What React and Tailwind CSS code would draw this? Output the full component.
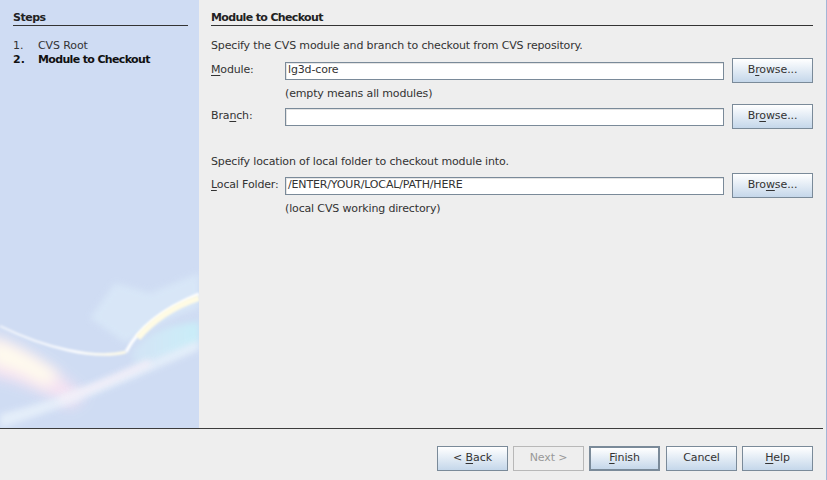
import React from "react";

const font = { fontFamily: '"DejaVu Sans", "Liberation Sans", sans-serif' };

function U({ children }) {
  return <span className="underline underline-offset-[2px] decoration-1">{children}</span>;
}

function Btn({ children, className = "", disabled = false, def = false }) {
  return (
    <div
      className={
        "flex h-[25px] w-[71px] items-center justify-center text-[11px] tracking-[-0.1px] " +
        (disabled
          ? "border border-[#b8b8b8] text-[#999999] bg-[#eeeeee] "
          : def
          ? "border-2 border-[#7a8a99] text-[#333333] bg-gradient-to-b from-[#ffffff] to-[#c5d7ea] "
          : "border border-[#7a8a99] text-[#333333] bg-gradient-to-b from-[#ffffff] to-[#c5d7ea] ") +
        className
      }
    >
      <span className="whitespace-pre">{children}</span>
    </div>
  );
}

function Input({ value }) {
  return (
    <div className="flex h-[18px] flex-1 items-center border border-[#7a8a99] bg-white pl-[2px] text-[11px] text-[#333333] shadow-[inset_1px_1px_0_#e4e4e4]">
      {value}
    </div>
  );
}

function Swoosh() {
  return (
    <svg className="absolute bottom-0 left-0" width="199" height="180" viewBox="0 0 199 180">
      <defs>
        <filter id="b1" x="-50%" y="-50%" width="200%" height="200%">
          <feGaussianBlur stdDeviation="7" />
        </filter>
        <filter id="b2" x="-50%" y="-50%" width="200%" height="200%">
          <feGaussianBlur stdDeviation="1.2" />
        </filter>
        <filter id="b3" x="-50%" y="-50%" width="200%" height="200%">
          <feGaussianBlur stdDeviation="3" />
        </filter>
        <linearGradient id="g2" x1="0" y1="0" x2="1" y2="0">
          <stop offset="0" stopColor="#d6ecf8" stopOpacity="0.5" />
          <stop offset="1" stopColor="#c8eef8" stopOpacity="1" />
        </linearGradient>
        <linearGradient id="g3" x1="0" y1="0" x2="1" y2="0">
          <stop offset="0" stopColor="#ffffff" stopOpacity="0.6" />
          <stop offset="0.6" stopColor="#ffffff" stopOpacity="0.95" />
          <stop offset="1" stopColor="#fffbe6" stopOpacity="1" />
        </linearGradient>
      </defs>
      <path d="M90 70 L115 35 L150 45 L199 25 L199 60 C165 70 145 85 125 95 Z" fill="#dcebf9" opacity="0.7" filter="url(#b3)" />
      <path d="M132 104 C148 82 175 76 199 74 L199 95 C175 108 150 115 135 118 Z" fill="url(#g2)" filter="url(#b3)" />
      <path d="M-10 88 C20 100 55 120 85 148 L70 160 C40 140 10 130 -10 128 Z" fill="#fbe3f2" opacity="0.9" filter="url(#b1)" />
      <path d="M-10 90 C15 98 40 112 60 128 L45 138 C25 125 5 118 -10 115 Z" fill="#fffced" filter="url(#b1)" />
      <path d="M0 78 C45 100 95 112 126 104" stroke="url(#g3)" strokeWidth="2.5" fill="none" filter="url(#b2)" />
      <path d="M126 104 C138 80 165 60 199 46" stroke="#ffffff" strokeWidth="3" fill="none" filter="url(#b2)" />
      <path d="M138 90 C155 70 175 58 199 50" stroke="#fffbe4" strokeWidth="6" fill="none" filter="url(#b2)" />
      <path d="M0 166 C60 152 130 122 199 92 L199 102 C130 132 60 162 0 180 Z" fill="#e8f1fb" opacity="0.85" filter="url(#b3)" />
      <path d="M60 152 C95 140 120 128 150 114" stroke="#f6eff8" strokeWidth="7" fill="none" filter="url(#b3)" opacity="0.8" />
    </svg>
  );
}

export default function App() {
  return (
    <div className="flex h-[480px] w-[827px] flex-col bg-[#eeeeee] text-[#333333]" style={font}>
      <div className="flex h-[428px]">
        <div className="relative h-full w-[199px] overflow-hidden bg-[#cfdcf3]">
          <div className="relative px-[13px] pt-[12px] pr-[11px]">
            <div className="border-b border-[#333333] pb-[1px] text-[11px] font-bold leading-[12px] tracking-[-0.5px] text-[#222222]">Steps</div>
            <div className="mt-[13px] flex text-[11px] leading-[14px] tracking-[-0.1px]">
              <span className="w-[25px]">1.</span>
              <span>CVS Root</span>
            </div>
            <div className="flex text-[11px] font-bold leading-[14px] text-[#111111]">
              <span className="w-[25px]">2.</span>
              <span className="tracking-[-0.65px]">Module to Checkout</span>
            </div>
          </div>
          <Swoosh />
        </div>
        <div className="flex-1 pl-[12px] pr-[13px] pt-[12px] tracking-[-0.15px]">
          <div className="border-b border-[#333333] pb-[1px] text-[11px] font-bold leading-[12px] tracking-[-0.65px] text-[#222222]">Module to Checkout</div>
          <div className="mt-[13px] text-[11px] leading-[14px]">Specify the CVS module and branch to checkout from CVS repository.</div>
          <div className="mt-[5px] flex items-center">
            <div className="w-[74px] text-[11px]"><U>M</U>odule:</div>
            <Input value="lg3d-core" />
            <Btn className="ml-[8px] w-[81px]">B<U>r</U>owse...</Btn>
          </div>
          <div className="mt-[4px] pl-[74px] text-[11px] leading-[14px]">(empty means all modules)</div>
          <div className="mt-[3px] flex items-center">
            <div className="w-[74px] text-[11px]">Bra<U>n</U>ch:</div>
            <Input value="" />
            <Btn className="ml-[8px] w-[81px]">Br<U>o</U>wse...</Btn>
          </div>
          <div className="mt-[26px] text-[11px] leading-[14px]">Specify location of local folder to checkout module into.</div>
          <div className="mt-[4px] flex items-center">
            <div className="w-[74px] text-[11px]"><U>L</U>ocal Folder:</div>
            <Input value="/ENTER/YOUR/LOCAL/PATH/HERE" />
            <Btn className="ml-[8px] w-[81px]">Bro<U>w</U>se...</Btn>
          </div>
          <div className="mt-[4px] pl-[74px] text-[11px] leading-[14px]">(local CVS working directory)</div>
        </div>
        <div className="w-[1px] bg-[#a3b5d6]" />
      </div>
      <div className="flex flex-1">
        <div className="flex flex-1 flex-col">
          <div className="mr-[3px] h-[1px] bg-[#3c3c3c]" />
          <div className="flex flex-1 items-start justify-end gap-[5px] pr-[13px] pt-[17px]">
            <Btn>&lt; <U>B</U>ack</Btn>
            <Btn disabled>Next &gt;</Btn>
            <Btn def><U>F</U>inish</Btn>
            <Btn className="ml-[1px]">Cancel</Btn>
            <Btn><U>H</U>elp</Btn>
          </div>
        </div>
        <div className="w-[1px] bg-[#a3b5d6]" />
      </div>
    </div>
  );
}
